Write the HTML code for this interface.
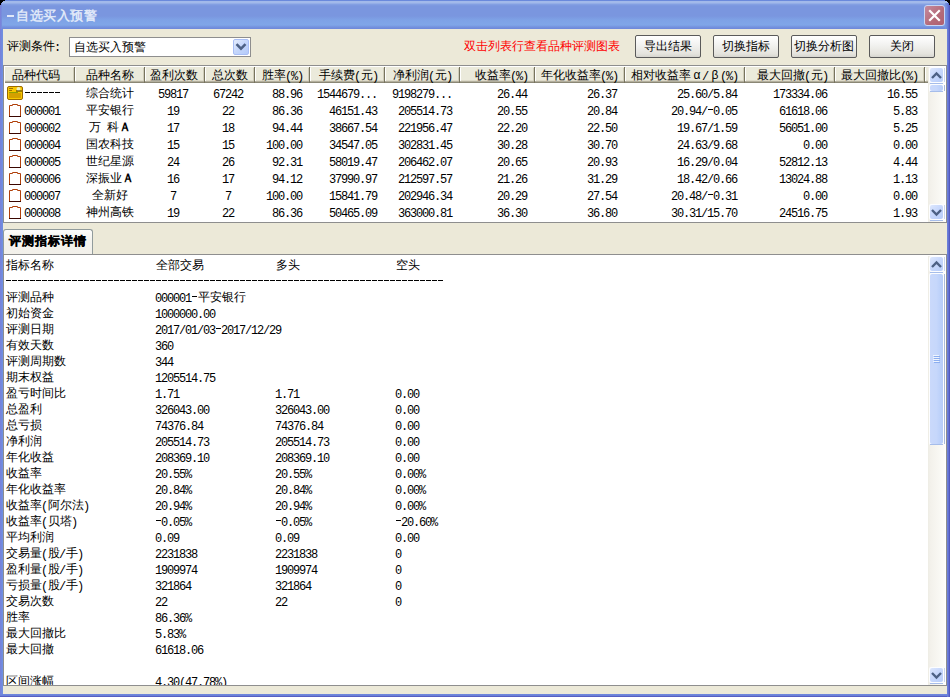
<!DOCTYPE html><html><head><meta charset="utf-8"><style>
*{margin:0;padding:0;box-sizing:border-box}
html,body{width:950px;height:697px;overflow:hidden;background:#ECE9D8}
body{position:relative;font:12px/16px "Liberation Sans",sans-serif;color:#000}
.a{position:absolute}
.t{position:absolute;white-space:pre;font:12px/16px "Liberation Sans",sans-serif;height:16px;-webkit-text-stroke:0px currentColor}
.t i{font-style:normal;font-family:"Liberation Mono",monospace;letter-spacing:-1.2px;position:relative;top:1px;left:-1px}
.t b.d{display:inline-block;width:6px;height:1px;background:linear-gradient(90deg,transparent 1px,currentColor 1px,currentColor 6px,transparent 6px);position:relative;top:-5px}
.t u{text-decoration:none;font-weight:bold}
.t s{text-decoration:none;display:inline-block;width:12px;text-align:center}
</style></head><body>
<div class="a" style="left:0;top:0;width:950px;height:29px;background:linear-gradient(#6A89DC 0px,#6A89DC 1px,#A2B9EA 1px,#A2B9EA 3px,#86A2E4 4px,#7A96DF 6px,#7A96DF 16px,#7EA2E6 20px,#80A6E8 25px,#7593DE 27px,#6D88DA 29px)"></div>
<div class="a" style="left:0;top:29px;width:3px;height:668px;background:linear-gradient(90deg,#7A7ED8,#7189DE,#7191E0)"></div>
<div class="a" style="left:0;top:694px;width:950px;height:3px;background:linear-gradient(#7188DD,#6A80D8,#4C4EB8)"></div>
<div class="a" style="left:947px;top:29px;width:3px;height:668px;background:linear-gradient(90deg,#7086DC,#6271D2,#4B4DB6)"></div>
<div class="a" style="left:945px;top:3px;width:5px;height:26px;background:linear-gradient(90deg,#7A96DF,#6F8ADC 30%,#6378D4 60%,#4B4DB6)"></div>
<div class="a" style="left:0;top:3px;width:2px;height:26px;background:linear-gradient(90deg,#7C7FD8,#7690DE)"></div>
<div class="a" style="left:0;top:0;width:5px;height:1px;background:#000"></div><div class="a" style="left:0;top:1px;width:3px;height:1px;background:#000"></div><div class="a" style="left:0;top:2px;width:2px;height:1px;background:#000"></div><div class="a" style="left:0;top:3px;width:1px;height:2px;background:#000"></div>
<div class="a" style="left:945px;top:0;width:5px;height:1px;background:#000"></div><div class="a" style="left:947px;top:1px;width:3px;height:1px;background:#000"></div><div class="a" style="left:948px;top:2px;width:2px;height:1px;background:#000"></div><div class="a" style="left:949px;top:3px;width:1px;height:2px;background:#000"></div>
<div class="a" style="left:7px;top:15px;width:7px;height:2px;background:#DFE7F8"></div>
<div class="a" style="left:16px;top:8px;white-space:pre;font:bold 13px/16px 'Liberation Sans',sans-serif;letter-spacing:0.5px;color:#DFE7F8">自选买入预警</div>
<div class="a" style="left:924px;top:5px;width:21px;height:21px;border:1px solid #C8D6F4;border-radius:3px;background:linear-gradient(135deg,#C58A9E,#B46A78 60%,#B06070)"></div>
<svg class="a" style="left:924px;top:5px" width="21" height="21"><path d="M6 6 L15 15 M15 6 L6 15" stroke="#fff" stroke-width="2.2" stroke-linecap="square"/></svg>
<div class="t" style="left:7px;top:38px;">评测条件<i>:</i></div>
<div class="a" style="left:69px;top:37px;width:182px;height:20px;border:1px solid #8E8E8E;background:#fff"></div>
<div class="t" style="left:74px;top:39px;">自选买入预警</div>
<div class="a" style="left:233px;top:39px;width:16px;height:16px;border:1px solid #A8BEF5;border-radius:2px;background:linear-gradient(135deg,#E4ECFD,#C4D6FB 50%,#B4CAF8)"></div>
<svg class="a" style="left:233px;top:39px" width="16" height="16"><path d="M3.5 5.2 L8 9.7 L12.5 5.2" fill="none" stroke="#4D6185" stroke-width="2.5"/></svg>
<div class="t" style="left:464px;top:38px;color:#FF0000">双击列表行查看品种评测图表</div>
<div class="a" style="left:635px;top:35px;width:66px;height:23px;border:1px solid #5A5A5A;border-radius:2px;background:linear-gradient(#FFFFFF,#F3F3F1 40%,#E4E3DD 85%,#D6D5CF)"></div>
<div class="t" style="left:644px;top:38px;">导出结果</div>
<div class="a" style="left:713px;top:35px;width:66px;height:23px;border:1px solid #5A5A5A;border-radius:2px;background:linear-gradient(#FFFFFF,#F3F3F1 40%,#E4E3DD 85%,#D6D5CF)"></div>
<div class="t" style="left:722px;top:38px;">切换指标</div>
<div class="a" style="left:791px;top:35px;width:66px;height:23px;border:1px solid #5A5A5A;border-radius:2px;background:linear-gradient(#FFFFFF,#F3F3F1 40%,#E4E3DD 85%,#D6D5CF)"></div>
<div class="t" style="left:794px;top:38px;">切换分析图</div>
<div class="a" style="left:869px;top:35px;width:66px;height:23px;border:1px solid #5A5A5A;border-radius:2px;background:linear-gradient(#FFFFFF,#F3F3F1 40%,#E4E3DD 85%,#D6D5CF)"></div>
<div class="t" style="left:890px;top:38px;">关闭</div>
<div class="a" style="left:3px;top:65px;width:944px;height:158px;border:1px solid #8E8E8E;background:#fff"></div>
<div class="a" style="left:5px;top:67px;width:923px;height:16px;background:linear-gradient(#EBEADB 0,#EBEADB 13px,#DEDBCA 13px,#DEDBCA 14px,#B3AF9D 14px,#B3AF9D 15px,#8A8775 15px)"></div>
<div class="a" style="left:73px;top:68px;width:1px;height:13px;background:#CFCCB9"></div><div class="a" style="left:74px;top:67px;width:1px;height:16px;background:#77745F"></div><div class="a" style="left:75px;top:68px;width:1px;height:13px;background:#fff"></div>
<div class="a" style="left:143px;top:68px;width:1px;height:13px;background:#CFCCB9"></div><div class="a" style="left:144px;top:67px;width:1px;height:16px;background:#77745F"></div><div class="a" style="left:145px;top:68px;width:1px;height:13px;background:#fff"></div>
<div class="a" style="left:203px;top:68px;width:1px;height:13px;background:#CFCCB9"></div><div class="a" style="left:204px;top:67px;width:1px;height:16px;background:#77745F"></div><div class="a" style="left:205px;top:68px;width:1px;height:13px;background:#fff"></div>
<div class="a" style="left:253px;top:68px;width:1px;height:13px;background:#CFCCB9"></div><div class="a" style="left:254px;top:67px;width:1px;height:16px;background:#77745F"></div><div class="a" style="left:255px;top:68px;width:1px;height:13px;background:#fff"></div>
<div class="a" style="left:308px;top:68px;width:1px;height:13px;background:#CFCCB9"></div><div class="a" style="left:309px;top:67px;width:1px;height:16px;background:#77745F"></div><div class="a" style="left:310px;top:68px;width:1px;height:13px;background:#fff"></div>
<div class="a" style="left:383px;top:68px;width:1px;height:13px;background:#CFCCB9"></div><div class="a" style="left:384px;top:67px;width:1px;height:16px;background:#77745F"></div><div class="a" style="left:385px;top:68px;width:1px;height:13px;background:#fff"></div>
<div class="a" style="left:458px;top:68px;width:1px;height:13px;background:#CFCCB9"></div><div class="a" style="left:459px;top:67px;width:1px;height:16px;background:#77745F"></div><div class="a" style="left:460px;top:68px;width:1px;height:13px;background:#fff"></div>
<div class="a" style="left:533px;top:68px;width:1px;height:13px;background:#CFCCB9"></div><div class="a" style="left:534px;top:67px;width:1px;height:16px;background:#77745F"></div><div class="a" style="left:535px;top:68px;width:1px;height:13px;background:#fff"></div>
<div class="a" style="left:623px;top:68px;width:1px;height:13px;background:#CFCCB9"></div><div class="a" style="left:624px;top:67px;width:1px;height:16px;background:#77745F"></div><div class="a" style="left:625px;top:68px;width:1px;height:13px;background:#fff"></div>
<div class="a" style="left:743px;top:68px;width:1px;height:13px;background:#CFCCB9"></div><div class="a" style="left:744px;top:67px;width:1px;height:16px;background:#77745F"></div><div class="a" style="left:745px;top:68px;width:1px;height:13px;background:#fff"></div>
<div class="a" style="left:833px;top:68px;width:1px;height:13px;background:#CFCCB9"></div><div class="a" style="left:834px;top:67px;width:1px;height:16px;background:#77745F"></div><div class="a" style="left:835px;top:68px;width:1px;height:13px;background:#fff"></div>
<div class="a" style="left:923px;top:68px;width:1px;height:13px;background:#CFCCB9"></div><div class="a" style="left:924px;top:67px;width:1px;height:16px;background:#77745F"></div><div class="a" style="left:925px;top:68px;width:1px;height:13px;background:#fff"></div>
<div class="t" style="left:12px;top:67px;">品种代码</div>
<div class="t" style="left:86px;top:67px;">品种名称</div>
<div class="t" style="left:150px;top:67px;">盈利次数</div>
<div class="t" style="left:212px;top:67px;">总次数</div>
<div class="t" style="left:262px;top:67px;">胜率<i>(%)</i></div>
<div class="t" style="left:319px;top:67px;">手续费<i>(</i>元<i>)</i></div>
<div class="t" style="left:393px;top:67px;">净利润<i>(</i>元<i>)</i></div>
<div class="t" style="left:475px;top:67px;">收益率<i>(%)</i></div>
<div class="t" style="left:541px;top:67px;">年化收益率<i>(%)</i></div>
<div class="t" style="left:631px;top:67px;">相对收益率<s>α</s><i>/</i><s>β</s><i>(%)</i></div>
<div class="t" style="left:757px;top:67px;">最大回撤<i>(</i>元<i>)</i></div>
<div class="t" style="left:841px;top:67px;">最大回撤比<i>(%)</i></div>
<svg class="a" style="left:7px;top:86px" width="16" height="14"><rect x="0.5" y="0.5" width="15" height="13" rx="1.5" fill="#F8C800" stroke="#9A6A00"/><rect x="2" y="7" width="12" height="5" fill="#D4A000"/><rect x="2" y="2" width="4" height="1" fill="#A07000"/><rect x="2" y="4" width="3" height="1" fill="#A07000"/><rect x="2" y="6" width="9" height="1" fill="#90A000"/><circle cx="11.5" cy="3" r="2" fill="#F0F0C0"/><path d="M9 5 L15 5" stroke="#403000"/></svg>
<div class="t" style="left:25px;top:85px;"><i><b class="d"></b><b class="d"></b><b class="d"></b><b class="d"></b><b class="d"></b><b class="d"></b></i></div>
<div class="t" style="left:86px;top:85px;">综合统计</div>
<div class="t" style="left:159px;top:85px;"><i>59817</i></div>
<div class="t" style="left:214px;top:85px;"><i>67242</i></div>
<div class="t" style="left:273px;top:85px;"><i>88.96</i></div>
<div class="t" style="left:318px;top:85px;"><i>1544679...</i></div>
<div class="t" style="left:393px;top:85px;"><i>9198279...</i></div>
<div class="t" style="left:498px;top:85px;"><i>26.44</i></div>
<div class="t" style="left:588px;top:85px;"><i>26.37</i></div>
<div class="t" style="left:678px;top:85px;"><i>25.60/5.84</i></div>
<div class="t" style="left:774px;top:85px;"><i>173334.06</i></div>
<div class="t" style="left:888px;top:85px;"><i>16.55</i></div>
<svg class="a" style="left:9px;top:104px" width="13" height="14"><path d="M0.5 12.5 V1.5 H3.5 V0.5 H8.5 V1.5 H11.5 V12.5 Z" fill="#fff" stroke="#B0400A"/><path d="M0 12.5 H12" stroke="#3A0600"/></svg>
<div class="t" style="left:25px;top:102px;"><i>000001</i></div>
<div class="t" style="left:86px;top:102px;">平安银行</div>
<div class="t" style="left:168px;top:102px;"><i>19</i></div>
<div class="t" style="left:223px;top:102px;"><i>22</i></div>
<div class="t" style="left:273px;top:102px;"><i>86.36</i></div>
<div class="t" style="left:330px;top:102px;"><i>46151.43</i></div>
<div class="t" style="left:399px;top:102px;"><i>205514.73</i></div>
<div class="t" style="left:498px;top:102px;"><i>20.55</i></div>
<div class="t" style="left:588px;top:102px;"><i>20.84</i></div>
<div class="t" style="left:672px;top:102px;"><i>20.94/<b class="d"></b>0.05</i></div>
<div class="t" style="left:780px;top:102px;"><i>61618.06</i></div>
<div class="t" style="left:894px;top:102px;"><i>5.83</i></div>
<svg class="a" style="left:9px;top:121px" width="13" height="14"><path d="M0.5 12.5 V1.5 H3.5 V0.5 H8.5 V1.5 H11.5 V12.5 Z" fill="#fff" stroke="#B0400A"/><path d="M0 12.5 H12" stroke="#3A0600"/></svg>
<div class="t" style="left:25px;top:119px;"><i>000002</i></div>
<div class="t" style="left:89px;top:119px;">万<i> </i>科<u>Ａ</u></div>
<div class="t" style="left:168px;top:119px;"><i>17</i></div>
<div class="t" style="left:223px;top:119px;"><i>18</i></div>
<div class="t" style="left:273px;top:119px;"><i>94.44</i></div>
<div class="t" style="left:330px;top:119px;"><i>38667.54</i></div>
<div class="t" style="left:399px;top:119px;"><i>221956.47</i></div>
<div class="t" style="left:498px;top:119px;"><i>22.20</i></div>
<div class="t" style="left:588px;top:119px;"><i>22.50</i></div>
<div class="t" style="left:678px;top:119px;"><i>19.67/1.59</i></div>
<div class="t" style="left:780px;top:119px;"><i>56051.00</i></div>
<div class="t" style="left:894px;top:119px;"><i>5.25</i></div>
<svg class="a" style="left:9px;top:138px" width="13" height="14"><path d="M0.5 12.5 V1.5 H3.5 V0.5 H8.5 V1.5 H11.5 V12.5 Z" fill="#fff" stroke="#B0400A"/><path d="M0 12.5 H12" stroke="#3A0600"/></svg>
<div class="t" style="left:25px;top:136px;"><i>000004</i></div>
<div class="t" style="left:86px;top:136px;">国农科技</div>
<div class="t" style="left:168px;top:136px;"><i>15</i></div>
<div class="t" style="left:223px;top:136px;"><i>15</i></div>
<div class="t" style="left:267px;top:136px;"><i>100.00</i></div>
<div class="t" style="left:330px;top:136px;"><i>34547.05</i></div>
<div class="t" style="left:399px;top:136px;"><i>302831.45</i></div>
<div class="t" style="left:498px;top:136px;"><i>30.28</i></div>
<div class="t" style="left:588px;top:136px;"><i>30.70</i></div>
<div class="t" style="left:678px;top:136px;"><i>24.63/9.68</i></div>
<div class="t" style="left:804px;top:136px;"><i>0.00</i></div>
<div class="t" style="left:894px;top:136px;"><i>0.00</i></div>
<svg class="a" style="left:9px;top:155px" width="13" height="14"><path d="M0.5 12.5 V1.5 H3.5 V0.5 H8.5 V1.5 H11.5 V12.5 Z" fill="#fff" stroke="#B0400A"/><path d="M0 12.5 H12" stroke="#3A0600"/></svg>
<div class="t" style="left:25px;top:153px;"><i>000005</i></div>
<div class="t" style="left:86px;top:153px;">世纪星源</div>
<div class="t" style="left:168px;top:153px;"><i>24</i></div>
<div class="t" style="left:223px;top:153px;"><i>26</i></div>
<div class="t" style="left:273px;top:153px;"><i>92.31</i></div>
<div class="t" style="left:330px;top:153px;"><i>58019.47</i></div>
<div class="t" style="left:399px;top:153px;"><i>206462.07</i></div>
<div class="t" style="left:498px;top:153px;"><i>20.65</i></div>
<div class="t" style="left:588px;top:153px;"><i>20.93</i></div>
<div class="t" style="left:678px;top:153px;"><i>16.29/0.04</i></div>
<div class="t" style="left:780px;top:153px;"><i>52812.13</i></div>
<div class="t" style="left:894px;top:153px;"><i>4.44</i></div>
<svg class="a" style="left:9px;top:172px" width="13" height="14"><path d="M0.5 12.5 V1.5 H3.5 V0.5 H8.5 V1.5 H11.5 V12.5 Z" fill="#fff" stroke="#B0400A"/><path d="M0 12.5 H12" stroke="#3A0600"/></svg>
<div class="t" style="left:25px;top:170px;"><i>000006</i></div>
<div class="t" style="left:86px;top:170px;">深振业<u>Ａ</u></div>
<div class="t" style="left:168px;top:170px;"><i>16</i></div>
<div class="t" style="left:223px;top:170px;"><i>17</i></div>
<div class="t" style="left:273px;top:170px;"><i>94.12</i></div>
<div class="t" style="left:330px;top:170px;"><i>37990.97</i></div>
<div class="t" style="left:399px;top:170px;"><i>212597.57</i></div>
<div class="t" style="left:498px;top:170px;"><i>21.26</i></div>
<div class="t" style="left:588px;top:170px;"><i>31.29</i></div>
<div class="t" style="left:678px;top:170px;"><i>18.42/0.66</i></div>
<div class="t" style="left:780px;top:170px;"><i>13024.88</i></div>
<div class="t" style="left:894px;top:170px;"><i>1.13</i></div>
<svg class="a" style="left:9px;top:189px" width="13" height="14"><path d="M0.5 12.5 V1.5 H3.5 V0.5 H8.5 V1.5 H11.5 V12.5 Z" fill="#fff" stroke="#B0400A"/><path d="M0 12.5 H12" stroke="#3A0600"/></svg>
<div class="t" style="left:25px;top:187px;"><i>000007</i></div>
<div class="t" style="left:92px;top:187px;">全新好</div>
<div class="t" style="left:171px;top:187px;"><i>7</i></div>
<div class="t" style="left:226px;top:187px;"><i>7</i></div>
<div class="t" style="left:267px;top:187px;"><i>100.00</i></div>
<div class="t" style="left:330px;top:187px;"><i>15841.79</i></div>
<div class="t" style="left:399px;top:187px;"><i>202946.34</i></div>
<div class="t" style="left:498px;top:187px;"><i>20.29</i></div>
<div class="t" style="left:588px;top:187px;"><i>27.54</i></div>
<div class="t" style="left:672px;top:187px;"><i>20.48/<b class="d"></b>0.31</i></div>
<div class="t" style="left:804px;top:187px;"><i>0.00</i></div>
<div class="t" style="left:894px;top:187px;"><i>0.00</i></div>
<svg class="a" style="left:9px;top:206px" width="13" height="14"><path d="M0.5 12.5 V1.5 H3.5 V0.5 H8.5 V1.5 H11.5 V12.5 Z" fill="#fff" stroke="#B0400A"/><path d="M0 12.5 H12" stroke="#3A0600"/></svg>
<div class="t" style="left:25px;top:204px;"><i>000008</i></div>
<div class="t" style="left:86px;top:204px;">神州高铁</div>
<div class="t" style="left:168px;top:204px;"><i>19</i></div>
<div class="t" style="left:223px;top:204px;"><i>22</i></div>
<div class="t" style="left:273px;top:204px;"><i>86.36</i></div>
<div class="t" style="left:330px;top:204px;"><i>50465.09</i></div>
<div class="t" style="left:399px;top:204px;"><i>363000.81</i></div>
<div class="t" style="left:498px;top:204px;"><i>36.30</i></div>
<div class="t" style="left:588px;top:204px;"><i>36.80</i></div>
<div class="t" style="left:672px;top:204px;"><i>30.31/15.70</i></div>
<div class="t" style="left:780px;top:204px;"><i>24516.75</i></div>
<div class="t" style="left:894px;top:204px;"><i>1.93</i></div>
<div class="a" style="left:928px;top:67px;width:17px;height:155px;background:linear-gradient(90deg,#EEEDE5,#F3F1EB 15%,#F8F7F2 60%,#FDFDFA)"></div>
<div class="a" style="left:929px;top:67px;width:15px;height:16px;border-radius:2px;background:#FCFDFF"></div>
<div class="a" style="left:930px;top:83px;width:13px;height:1px;background:#A6BDEA"></div>
<div class="a" style="left:944px;top:68px;width:1px;height:14px;background:#C9D6EE"></div>
<div class="a" style="left:930px;top:68px;width:13px;height:14px;border-radius:2px;background:linear-gradient(135deg,#DDE7FD 0%,#C8D8FC 45%,#B7CDF9 100%)"></div>
<svg class="a" style="left:930px;top:68px" width="13" height="14"><path d="M2 10 L6.5 5.5 L11 10" fill="none" stroke="#4D6185" stroke-width="2.4" stroke-linecap="butt"/></svg>
<div class="a" style="left:929px;top:204px;width:15px;height:16px;border-radius:2px;background:#FCFDFF"></div>
<div class="a" style="left:930px;top:220px;width:13px;height:1px;background:#A6BDEA"></div>
<div class="a" style="left:944px;top:205px;width:1px;height:14px;background:#C9D6EE"></div>
<div class="a" style="left:930px;top:205px;width:13px;height:14px;border-radius:2px;background:linear-gradient(135deg,#DDE7FD 0%,#C8D8FC 45%,#B7CDF9 100%)"></div>
<svg class="a" style="left:930px;top:205px" width="13" height="14"><path d="M2 5 L6.5 9.5 L11 5" fill="none" stroke="#4D6185" stroke-width="2.4" stroke-linecap="butt"/></svg>
<div class="a" style="left:929px;top:84px;width:15px;height:8px;border-radius:2px;background:#FCFDFF"></div>
<div class="a" style="left:944px;top:85px;width:1px;height:6px;background:#A9BBDB"></div>
<div class="a" style="left:930px;top:91px;width:13px;height:1px;background:#A6BDEA"></div>
<div class="a" style="left:930px;top:85px;width:13px;height:6px;border-radius:2px;background:linear-gradient(90deg,#CAD9FB,#C6D7FB 50%,#B6CDF9)"></div>
<div class="a" style="left:3px;top:229px;width:90px;height:25px;border:1px solid #919B9C;border-bottom:none;border-radius:3px 3px 0 0;background:linear-gradient(#FCFCFB,#F4F3EE 40%,#F2F0EA)"></div>
<div class="t" style="left:9px;top:233px;font-weight:bold;letter-spacing:1px;-webkit-text-stroke:0.35px #000">评测指标详情</div>
<div class="a" style="left:3px;top:254px;width:944px;height:432px;border:1px solid #8E8E8E;background:#fff"></div>
<div class="a" style="left:4px;top:255px;width:925px;height:430px;overflow:hidden">
<div class="t" style="left:2px;top:2px;">指标名称</div>
<div class="t" style="left:152px;top:2px;">全部交易</div>
<div class="t" style="left:272px;top:2px;">多头</div>
<div class="t" style="left:392px;top:2px;">空头</div>
<div class="t" style="left:2px;top:34px;">评测品种</div>
<div class="t" style="left:152px;top:34px;"><i>000001<b class="d"></b></i>平安银行</div>
<div class="t" style="left:2px;top:50px;">初始资金</div>
<div class="t" style="left:152px;top:50px;"><i>1000000.00</i></div>
<div class="t" style="left:2px;top:66px;">评测日期</div>
<div class="t" style="left:152px;top:66px;"><i>2017/01/03<b class="d"></b>2017/12/29</i></div>
<div class="t" style="left:2px;top:82px;">有效天数</div>
<div class="t" style="left:152px;top:82px;"><i>360</i></div>
<div class="t" style="left:2px;top:98px;">评测周期数</div>
<div class="t" style="left:152px;top:98px;"><i>344</i></div>
<div class="t" style="left:2px;top:114px;">期末权益</div>
<div class="t" style="left:152px;top:114px;"><i>1205514.75</i></div>
<div class="t" style="left:2px;top:130px;">盈亏时间比</div>
<div class="t" style="left:152px;top:130px;"><i>1.71</i></div>
<div class="t" style="left:272px;top:130px;"><i>1.71</i></div>
<div class="t" style="left:392px;top:130px;"><i>0.00</i></div>
<div class="t" style="left:2px;top:146px;">总盈利</div>
<div class="t" style="left:152px;top:146px;"><i>326043.00</i></div>
<div class="t" style="left:272px;top:146px;"><i>326043.00</i></div>
<div class="t" style="left:392px;top:146px;"><i>0.00</i></div>
<div class="t" style="left:2px;top:162px;">总亏损</div>
<div class="t" style="left:152px;top:162px;"><i>74376.84</i></div>
<div class="t" style="left:272px;top:162px;"><i>74376.84</i></div>
<div class="t" style="left:392px;top:162px;"><i>0.00</i></div>
<div class="t" style="left:2px;top:178px;">净利润</div>
<div class="t" style="left:152px;top:178px;"><i>205514.73</i></div>
<div class="t" style="left:272px;top:178px;"><i>205514.73</i></div>
<div class="t" style="left:392px;top:178px;"><i>0.00</i></div>
<div class="t" style="left:2px;top:194px;">年化收益</div>
<div class="t" style="left:152px;top:194px;"><i>208369.10</i></div>
<div class="t" style="left:272px;top:194px;"><i>208369.10</i></div>
<div class="t" style="left:392px;top:194px;"><i>0.00</i></div>
<div class="t" style="left:2px;top:210px;">收益率</div>
<div class="t" style="left:152px;top:210px;"><i>20.55%</i></div>
<div class="t" style="left:272px;top:210px;"><i>20.55%</i></div>
<div class="t" style="left:392px;top:210px;"><i>0.00%</i></div>
<div class="t" style="left:2px;top:226px;">年化收益率</div>
<div class="t" style="left:152px;top:226px;"><i>20.84%</i></div>
<div class="t" style="left:272px;top:226px;"><i>20.84%</i></div>
<div class="t" style="left:392px;top:226px;"><i>0.00%</i></div>
<div class="t" style="left:2px;top:242px;">收益率<i>(</i>阿尔法<i>)</i></div>
<div class="t" style="left:152px;top:242px;"><i>20.94%</i></div>
<div class="t" style="left:272px;top:242px;"><i>20.94%</i></div>
<div class="t" style="left:392px;top:242px;"><i>0.00%</i></div>
<div class="t" style="left:2px;top:258px;">收益率<i>(</i>贝塔<i>)</i></div>
<div class="t" style="left:152px;top:258px;"><i><b class="d"></b>0.05%</i></div>
<div class="t" style="left:272px;top:258px;"><i><b class="d"></b>0.05%</i></div>
<div class="t" style="left:392px;top:258px;"><i><b class="d"></b>20.60%</i></div>
<div class="t" style="left:2px;top:274px;">平均利润</div>
<div class="t" style="left:152px;top:274px;"><i>0.09</i></div>
<div class="t" style="left:272px;top:274px;"><i>0.09</i></div>
<div class="t" style="left:392px;top:274px;"><i>0.00</i></div>
<div class="t" style="left:2px;top:290px;">交易量<i>(</i>股<i>/</i>手<i>)</i></div>
<div class="t" style="left:152px;top:290px;"><i>2231838</i></div>
<div class="t" style="left:272px;top:290px;"><i>2231838</i></div>
<div class="t" style="left:392px;top:290px;"><i>0</i></div>
<div class="t" style="left:2px;top:306px;">盈利量<i>(</i>股<i>/</i>手<i>)</i></div>
<div class="t" style="left:152px;top:306px;"><i>1909974</i></div>
<div class="t" style="left:272px;top:306px;"><i>1909974</i></div>
<div class="t" style="left:392px;top:306px;"><i>0</i></div>
<div class="t" style="left:2px;top:322px;">亏损量<i>(</i>股<i>/</i>手<i>)</i></div>
<div class="t" style="left:152px;top:322px;"><i>321864</i></div>
<div class="t" style="left:272px;top:322px;"><i>321864</i></div>
<div class="t" style="left:392px;top:322px;"><i>0</i></div>
<div class="t" style="left:2px;top:338px;">交易次数</div>
<div class="t" style="left:152px;top:338px;"><i>22</i></div>
<div class="t" style="left:272px;top:338px;"><i>22</i></div>
<div class="t" style="left:392px;top:338px;"><i>0</i></div>
<div class="t" style="left:2px;top:354px;">胜率</div>
<div class="t" style="left:152px;top:354px;"><i>86.36%</i></div>
<div class="t" style="left:2px;top:370px;">最大回撤比</div>
<div class="t" style="left:152px;top:370px;"><i>5.83%</i></div>
<div class="t" style="left:2px;top:386px;">最大回撤</div>
<div class="t" style="left:152px;top:386px;"><i>61618.06</i></div>
<div class="t" style="left:2px;top:418px;">区间涨幅</div>
<div class="t" style="left:152px;top:418px;"><i>4.30(47.78%)</i></div>
<div class="a" style="left:2px;top:25px;width:438px;height:1px;background:repeating-linear-gradient(90deg,#000 0,#000 5px,transparent 5px,transparent 6px)"></div>
</div>
<div class="a" style="left:928px;top:256px;width:17px;height:429px;background:linear-gradient(90deg,#EEEDE5,#F3F1EB 15%,#F8F7F2 60%,#FDFDFA)"></div>
<div class="a" style="left:929px;top:256px;width:15px;height:16px;border-radius:2px;background:#FCFDFF"></div>
<div class="a" style="left:930px;top:272px;width:13px;height:1px;background:#A6BDEA"></div>
<div class="a" style="left:944px;top:257px;width:1px;height:14px;background:#C9D6EE"></div>
<div class="a" style="left:930px;top:257px;width:13px;height:14px;border-radius:2px;background:linear-gradient(135deg,#DDE7FD 0%,#C8D8FC 45%,#B7CDF9 100%)"></div>
<svg class="a" style="left:930px;top:257px" width="13" height="14"><path d="M2 10 L6.5 5.5 L11 10" fill="none" stroke="#4D6185" stroke-width="2.4" stroke-linecap="butt"/></svg>
<div class="a" style="left:929px;top:667px;width:15px;height:16px;border-radius:2px;background:#FCFDFF"></div>
<div class="a" style="left:930px;top:683px;width:13px;height:1px;background:#A6BDEA"></div>
<div class="a" style="left:944px;top:668px;width:1px;height:14px;background:#C9D6EE"></div>
<div class="a" style="left:930px;top:668px;width:13px;height:14px;border-radius:2px;background:linear-gradient(135deg,#DDE7FD 0%,#C8D8FC 45%,#B7CDF9 100%)"></div>
<svg class="a" style="left:930px;top:668px" width="13" height="14"><path d="M2 5 L6.5 9.5 L11 5" fill="none" stroke="#4D6185" stroke-width="2.4" stroke-linecap="butt"/></svg>
<div class="a" style="left:929px;top:273px;width:15px;height:172px;border-radius:2px;background:#FCFDFF"></div>
<div class="a" style="left:944px;top:274px;width:1px;height:170px;background:#A9BBDB"></div>
<div class="a" style="left:930px;top:444px;width:13px;height:1px;background:#A6BDEA"></div>
<div class="a" style="left:930px;top:274px;width:13px;height:170px;border-radius:2px;background:linear-gradient(90deg,#CAD9FB,#C6D7FB 50%,#B6CDF9)"></div>
<div class="a" style="left:933px;top:355px;width:6px;height:1px;background:#EEF4FE"></div><div class="a" style="left:934px;top:356px;width:6px;height:1px;background:#8CAEF0"></div>
<div class="a" style="left:933px;top:357px;width:6px;height:1px;background:#EEF4FE"></div><div class="a" style="left:934px;top:358px;width:6px;height:1px;background:#8CAEF0"></div>
<div class="a" style="left:933px;top:359px;width:6px;height:1px;background:#EEF4FE"></div><div class="a" style="left:934px;top:360px;width:6px;height:1px;background:#8CAEF0"></div>
<div class="a" style="left:933px;top:361px;width:6px;height:1px;background:#EEF4FE"></div><div class="a" style="left:934px;top:362px;width:6px;height:1px;background:#8CAEF0"></div>
</body></html>
